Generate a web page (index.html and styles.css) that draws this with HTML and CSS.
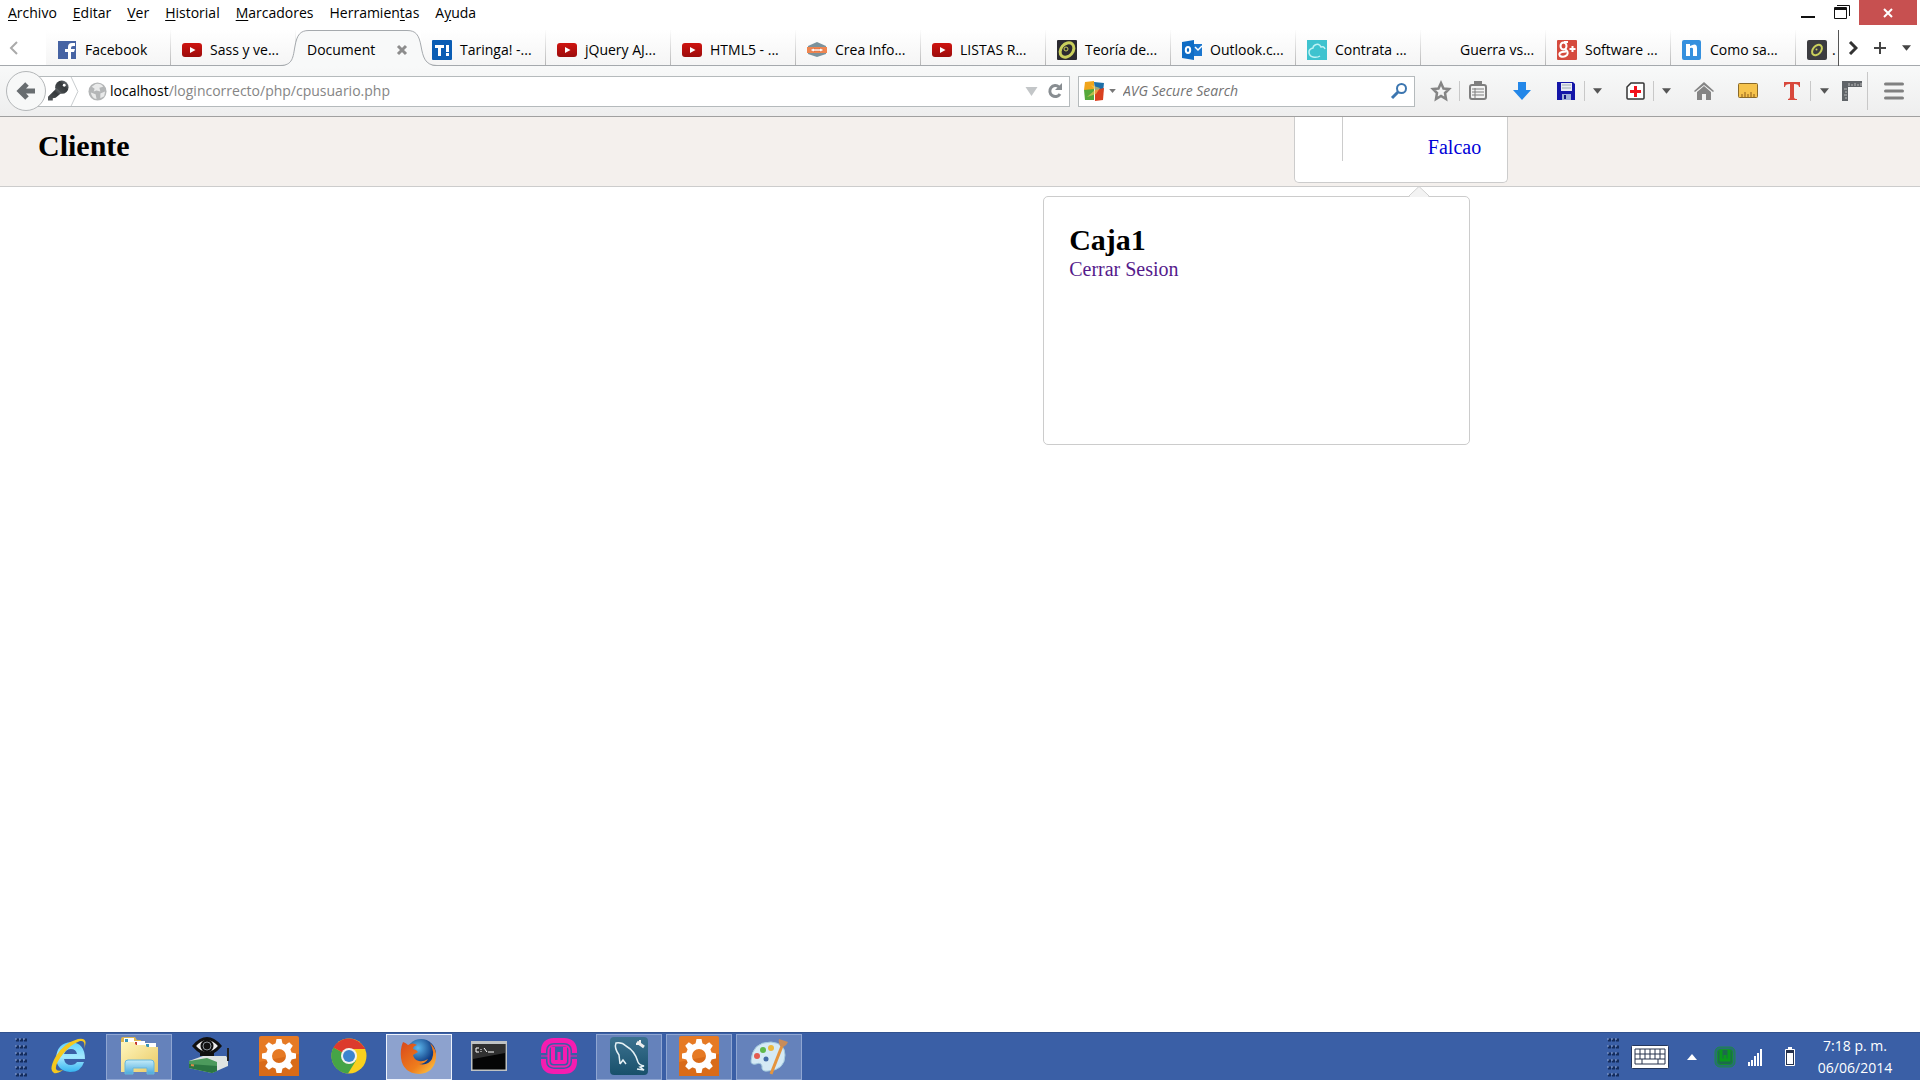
FILE: index.html
```html
<!DOCTYPE html>
<html lang="es">
<head>
<meta charset="utf-8">
<title>Document</title>
<link rel="stylesheet" href="styles.css">
</head>
<body>
<svg class="sprite" aria-hidden="true">
  <defs>
    <linearGradient id="redg" x1="0" y1="0" x2="0" y2="1"><stop offset="0" stop-color="#cf1410"/><stop offset="1" stop-color="#9c0c0c"/></linearGradient>
    <linearGradient id="foldg" x1="0" y1="0" x2="1" y2="1"><stop offset="0" stop-color="#fff6bd"/><stop offset="1" stop-color="#e9c964"/></linearGradient>
    <linearGradient id="clipg" x1="0" y1="0" x2="0" y2="1"><stop offset="0" stop-color="#c4ecfa"/><stop offset="1" stop-color="#4aa9dc"/></linearGradient>
    <linearGradient id="ieg" x1="0" y1="0" x2="0" y2="1"><stop offset="0" stop-color="#5fd2fb"/><stop offset=".5" stop-color="#a4e8ff"/><stop offset="1" stop-color="#35b4f0"/></linearGradient>
    <linearGradient id="foxg" x1="0" y1="0" x2="1" y2="1"><stop offset="0" stop-color="#d9481c"/><stop offset=".6" stop-color="#ef7d1c"/><stop offset="1" stop-color="#ffd34a"/></linearGradient>
    <linearGradient id="sqlg" x1="0" y1="0" x2="0" y2="1"><stop offset="0" stop-color="#3c7290"/><stop offset="1" stop-color="#18506b"/></linearGradient>
    <radialGradient id="globeg" cx=".4" cy=".3"><stop offset="0" stop-color="#5db8ee"/><stop offset="1" stop-color="#123f86"/></radialGradient>
    <linearGradient id="keyg" x1="1" y1="0" x2="0" y2="1"><stop offset="0" stop-color="#82878b"/><stop offset=".4" stop-color="#34383b"/><stop offset="1" stop-color="#53575a"/></linearGradient>
  </defs>
  <symbol id="youtube" viewBox="0 0 20 20"><rect y="3" width="20" height="14" rx="3" fill="url(#redg)"/><path d="M8 7v6l5.500-3z" fill="#fff"/></symbol>
  <symbol id="down" viewBox="0 0 10 6"><path d="M0 0h10L5 6z" fill="currentColor"/></symbol>
  <symbol id="gear" viewBox="0 0 40 40"><rect width="40" height="40" rx="2" fill="#e67a24"/><path d="M0 26L40 18V40H0z" fill="#d96b19"/><circle cx="20" cy="20" r="10" fill="none" stroke="#fff" stroke-width="6"/><path d="M17.500 3h5l1.500 7h-8zM17.500 37h5l1.500-7h-8zM3 17.500v5l7 1.500v-8zM37 17.500v5l-7 1.500v-8zM6.200 9.800l3.600-3.600 6 4-5.600 5.600zM33.800 9.800l-3.600-3.600-6 4 5.600 5.600zM6.200 30.200l3.600 3.600 6-4-5.600-5.600zM33.800 30.200l-3.600 3.600-6-4 5.600-5.600z" fill="#fff"/></symbol>
  <symbol id="wamp" viewBox="0 0 36 36"><path d="M2.500 15V12Q3 3 13 2.500h10Q33 3 33.500 12v3M2.500 21v3Q3 33 13 33.500h10Q33 33 33.500 24v-3" fill="none" stroke="currentColor" stroke-width="5"/><path d="M0 18h8M28 18h8" stroke="currentColor" stroke-width="1"/><rect x="7.500" y="7.500" width="21" height="21" rx="5" fill="none" stroke="currentColor" stroke-width="2"/><path d="M10 9h4v13h8V9h4v14q0 3-3 3H13q-3 0-3-3zM16.500 14h3v10h-3z" fill="currentColor"/></symbol>
  <symbol id="grip" viewBox="0 0 12 40"><path d="M1 3h12M1 10h12M1 17h12M1 24h12M1 31h12M1 38h12" stroke="#142c5c" stroke-width="3" stroke-dasharray="3 1"/><path d="M0 2h12M0 9h12M0 16h12M0 23h12M0 30h12M0 37h12" stroke="#91a8d4" stroke-width="1" stroke-dasharray="2 2"/></symbol>
</svg>

<header class="browser">
  <div class="titlebar">
    <nav class="menu" aria-label="Menú">
      <button><u>A</u>rchivo</button><button><u>E</u>ditar</button><button><u>V</u>er</button><button><u>H</u>istorial</button><button><u>M</u>arcadores</button><button>Herramien<u>t</u>as</button><button>A<u>y</u>uda</button>
    </nav>
    <div class="window-controls">
      <button aria-label="Minimizar"><svg width="16" height="16"><path d="M1 13h14" stroke="#111" stroke-width="2"/></svg></button>
      <button aria-label="Restaurar"><svg width="16" height="16" fill="none" stroke="#111"><path d="M3 1.500h12.500V12M1 4.500h11M.500 3.500h12v11H.500z"/><path d="M0 5h13" stroke-width="2"/></svg></button>
      <button class="close" aria-label="Cerrar"><svg width="12" height="10"><path d="M2 1l8 8M10 1L2 9" stroke="#fff" stroke-width="2"/></svg></button>
    </div>
  </div>

  <div class="tabbar">
    <button class="scroll-left" aria-label="Pestañas anteriores"><svg width="9" height="14"><path d="M8 1L2 7l6 6" fill="none" stroke="#aaa" stroke-width="2"/></svg></button>
    <div class="tabs">
      <button class="tab"><svg class="fav" viewBox="0 0 20 20"><path d="M1 1h18v18H1z" fill="#4663a3"/><path d="M11 19v-7H8V9h3V7q0-4 4-4h3v3h-2q-2 0-2 2v1h4l-1 3h-3v7z" fill="#fff"/></svg><span>Facebook</span></button>
      <button class="tab"><svg class="fav"><use href="#youtube"/></svg><span>Sass y ve...</span></button>
      <div class="tab selected">
        <svg class="tab-shape" viewBox="0 0 157 37"><path d="M0 37V36C13 36 13 27 15 16C17 5 20 1 29 1H127C136 1 139 5 141 16C143 27 145 36 157 36V37z" fill="#f8f9f9"/><path d="M0 35.500C13 35.500 13 27 15 16C17 5 20 .500 29 .500H127C136 .500 139 5 141 16C143 27 145 35.500 157 35.500" fill="none" stroke="#a5a9ad"/></svg>
        <button class="tab-name">Document</button>
        <button class="tab-close" aria-label="Cerrar pestaña"><svg width="12" height="12"><path d="M2 2l8 8M10 2l-8 8" stroke="#8d8d8d" stroke-width="3"/></svg></button>
      </div>
      <button class="tab"><svg class="fav" viewBox="0 0 20 20"><rect width="20" height="20" rx="1" fill="#0b5db4"/><path d="M3 5h9v3H9v8H6V8H3zM14 5h3v7h-3zM14 13h3v3h-3z" fill="#fff"/></svg><span>Taringa! -...</span></button>
      <button class="tab"><svg class="fav"><use href="#youtube"/></svg><span>jQuery AJ...</span></button>
      <button class="tab"><svg class="fav"><use href="#youtube"/></svg><span>HTML5 - ...</span></button>
      <button class="tab"><svg class="fav" viewBox="0 0 20 20"><path d="M1 6l9-4 9 4v1H1zM1 13h18v1l-9 3-9-3z" fill="#7b929c"/><path d="M0 7h20v6H0z" fill="#ef8650"/><path d="M3 10l4-2v1h6V8l4 2-4 2v-1H7v1z" fill="#fff" stroke="#d85b2b" stroke-width=".5"/></svg><span>Crea Info...</span></button>
      <button class="tab"><svg class="fav"><use href="#youtube"/></svg><span>LISTAS R...</span></button>
      <button class="tab"><svg class="fav" viewBox="0 0 20 20"><rect width="20" height="20" rx="1" fill="#2b2a30"/><ellipse cx="10" cy="10" rx="8" ry="6" transform="rotate(-50 10 10)" fill="none" stroke="#c9cf5c" stroke-width="3"/><circle cx="9" cy="9" r="2" fill="none" stroke="#c9cf5c"/></svg><span>Teoría de...</span></button>
      <button class="tab"><svg class="fav" viewBox="0 0 20 20"><path d="M11 4h9v12h-9z" fill="#1b77cf"/><path d="M13 7l3 3 4-4" fill="none" stroke="#fff" stroke-width="1.500"/><path d="M0 2l12-2v20L0 18z" fill="#0f6cc4"/><ellipse cx="6" cy="10" rx="2.200" ry="3" fill="none" stroke="#fff" stroke-width="2"/></svg><span>Outlook.c...</span></button>
      <button class="tab"><svg class="fav" viewBox="0 0 20 20"><rect width="20" height="20" fill="#3fc3cf"/><path d="M18 9q-1-3-4-2Q12 3 8 5q-2 1-2 3-4 1-4 4 0 4 4 5 4 1 7-1" fill="none" stroke="#bff2f4" stroke-width="1.500"/></svg><span>Contrata ...</span></button>
      <button class="tab"><i class="fav"></i><span>Guerra vs...</span></button>
      <button class="tab"><svg class="fav" viewBox="0 0 20 20"><rect width="20" height="20" rx="1" fill="#d54a3d"/><g fill="none" stroke="#fff" stroke-width="2"><ellipse cx="6.500" cy="6" rx="3" ry="3.500"/><path d="M7 2h4M8 9q4 3 2 6-3 3-7 1-2-3 2-4l4-.500M12.500 9h6M15.500 6v6"/></g></svg><span>Software ...</span></button>
      <button class="tab"><svg class="fav" viewBox="0 0 20 20"><rect width="19" height="20" rx="2" fill="#3590de"/><path d="M4 4h4v2q7-4 7 2v8h-4V9q0-2-3-1v8H4z" fill="#fff"/></svg><span>Como sa...</span></button>
      <button class="tab last" aria-label="Pestaña 15"><svg class="fav" viewBox="0 0 20 20"><rect width="20" height="20" rx="2" fill="#3c3c40"/><ellipse cx="10" cy="10" rx="6" ry="4" transform="rotate(-50 10 10)" fill="none" stroke="#c9cf5c" stroke-width="2"/><circle cx="9.500" cy="9.500" r="1" fill="#c9cf5c"/></svg><span>.</span></button>
    </div>
    <div class="tab-tools">
      <button aria-label="Pestañas siguientes"><svg width="10" height="14"><path d="M2 1l6 6-6 6" fill="none" stroke="#333" stroke-width="3"/></svg></button>
      <button aria-label="Nueva pestaña"><svg width="14" height="14"><path d="M7 1v12M1 7h12" stroke="#444" stroke-width="2"/></svg></button>
      <button aria-label="Lista de pestañas"><svg width="9" height="6"><use href="#down"/></svg></button>
    </div>
  </div>

  <div class="navbar">
    <button class="back" aria-label="Atrás"><svg width="20" height="18"><path d="M19 9H5M11 2L4 9l7 7" fill="none" stroke="#686d70" stroke-width="5"/></svg></button>
    <div class="urlbox">
      <svg class="key" viewBox="0 0 22 22"><circle cx="14.500" cy="7" r="7" fill="url(#keyg)"/><path d="M9 8l5 5-6 5-3 .500V21H0v-4z" fill="url(#keyg)"/><circle cx="17" cy="5" r="1.500" fill="#fff"/></svg>
      <svg class="chevron" viewBox="0 0 10 30"><path d="M1 0l7 15-7 15" fill="none" stroke="#c6cacc"/></svg>
      <svg class="globe" viewBox="0 0 20 20"><circle cx="10" cy="10" r="9.500" fill="#b4b6b7"/><path d="M8 2q6-1 8 3l-4 1 1 4-4-1-3 1 1-3-3-2zM3 11l5 2 1 5q-5-1-6-7zM13 12l5-2-1 5-4 2z" fill="#e9eaea"/></svg>
      <div class="address" role="textbox" aria-label="Dirección"><b>localhost</b>/logincorrecto/php/cpusuario.php</div>
      <button aria-label="Historial de direcciones"><svg width="13" height="9" color="#c3c6c8"><path d="M.500 0h12L6.500 9z" fill="currentColor"/></svg></button>
      <button aria-label="Recargar"><svg width="16" height="16"><path d="M12 4a5.500 5.500 0 1 0 1 7" fill="none" stroke="#888d91" stroke-width="3"/><path d="M15 0v7H8z" fill="#888d91"/></svg></button>
    </div>
    <div class="searchbox">
      <button class="engine" aria-label="Motor de búsqueda"><svg width="20" height="20"><path d="M1 1l9-1v10L0 9z" fill="#f0a51c"/><path d="M10 1l10 1-1 9-8-2z" fill="#1e6fa8"/><path d="M0 9l10-1v11H1z" fill="#56a83a"/><path d="M11 9l9-2-1 12-8 1z" fill="#d9411f"/><path d="M7 4l4 5-8 7 9-3 4-6z" fill="#f5d15a" opacity=".6"/></svg><svg width="7" height="4" color="#777"><use href="#down"/></svg></button>
      <input type="text" aria-label="Buscar" placeholder="AVG Secure Search">
      <button aria-label="Buscar ahora"><svg width="18" height="18"><circle cx="11.500" cy="6.500" r="4.500" fill="none" stroke="#3c76b0" stroke-width="2"/><path d="M8 10l-6 6" stroke="#3c76b0" stroke-width="3"/></svg></button>
    </div>
    <div class="tools">
      <div class="group"><button aria-label="Añadir a marcadores"><svg width="22" height="22"><path d="M11 3l2.500 5.500 5.500.500-4 4 1 6-5-3-5 3 1-6-4-4 5.500-.500z" fill="none" stroke="#858585" stroke-width="2.500"/></svg></button><hr><button aria-label="Marcadores"><svg width="18" height="20" fill="none" stroke="#7f7f7f" stroke-width="2"><rect x="1" y="4" width="16" height="14" rx="2"/><path d="M3 8h12M3 11h12M3 14h12M6 7v10" stroke-width="1"/><path d="M6 4V1h6v3z" fill="#7f7f7f"/></svg></button></div>
      <div class="group"><button aria-label="Descargas"><svg width="18" height="18"><path d="M5 0h8v8h5l-9 10L0 8h5z" fill="#2387e8"/></svg></button></div>
      <div class="group"><button aria-label="Guardar"><svg width="18" height="18"><path d="M0 0h16l2 2v16H0z" fill="#1416a8"/><path d="M4 1h11v8H4z" fill="#e8eaf5"/><path d="M5 3h9M5 6h9" stroke="#9aa"/><path d="M5 12h9v6H5z" fill="#9fb0d8"/><path d="M7 13h2v4H7z" fill="#141480"/></svg></button><hr><button class="arrow" aria-label="Opciones de guardar"><svg width="9" height="6"><use href="#down"/></svg></button></div>
      <div class="group"><button aria-label="Restaurar sesión"><svg width="19" height="18"><path d="M5 1h12q1 0 1 1v14q0 1-1 1H2q-1 0-1-1V5z" fill="#fff" stroke="#333" stroke-width="1.500"/><path d="M8 4h3v4h4v3h-4v4H8v-4H4V8h4z" fill="#f3101a"/></svg></button><hr><button class="arrow" aria-label="Opciones de sesión"><svg width="9" height="6"><use href="#down"/></svg></button></div>
      <div class="group"><button aria-label="Inicio"><svg width="20" height="18"><path d="M10 0l10 9-1 1-9-7-9 7-1-1zM3 10l7-6 7 6v8h-5v-6H8v6H3z" fill="#858585"/></svg></button></div>
      <div class="group"><button aria-label="Regla"><svg width="20" height="16"><rect x=".500" y=".500" width="19" height="14" rx="1" fill="#f6c34c" stroke="#8b6a28"/><path d="M4 14v-3M7 14v-5M10 14v-3M13 14v-5M16 14v-3" stroke="#8b5b18"/></svg></button></div>
      <div class="group"><button aria-label="Texto"><svg width="16" height="18"><path d="M0 0h16v5h-1q0-3-5-3v13q0 2 3 2v1H4v-1q2 0 2-2V2Q1 2 1 5H0z" fill="#d8483c"/></svg></button><hr><button class="arrow wide" aria-label="Opciones de texto"><svg width="9" height="6"><use href="#down"/></svg></button><button class="corner" aria-label="Medir"><svg width="20" height="20"><path d="M0 0h20v6H6v14H0z" fill="#606468"/><path d="M7 5V2M10 5V3M13 5V2M16 5V3M19 5V2M5 8H2M5 11H3M5 14H2M5 17H3" stroke="#bbb"/></svg></button><hr class="tall"><button class="burger" aria-label="Abrir menú"><svg width="20" height="18"><path d="M1.500 2h17M1.500 9h17M1.500 16h17" stroke="#808080" stroke-width="3" stroke-linecap="round"/></svg></button></div>
    </div>
  </div>
</header>

<main class="page">
  <header class="site-header">
    <h1>Cliente</h1>
    <div class="user">
      <div class="avatar"></div>
      <a href="#sesion">Falcao</a>
      <section class="popup" id="sesion">
        <svg class="pointer" viewBox="0 0 22 11"><path d="M1 11L11 1l10 10z" fill="#f3f3f3"/><path d="M1 10L11 .500 21 10" fill="none" stroke="#ccc"/></svg>
        <h2>Caja1</h2>
        <a href="#salir">Cerrar Sesion</a>
      </section>
    </div>
  </header>
</main>

<footer class="taskbar">
  <svg class="grip"><use href="#grip"/></svg>
  <div class="apps">
    <button aria-label="Internet Explorer"><svg width="40" height="40"><path d="M36 23H15q1 6 7 6 4 0 6-3h7q-3 10-14 10Q8 35 7 22 8 7 22 6q14 1 14 17zM15 18h13q-1-5-6-5t-7 5z" fill="url(#ieg)"/><path d="M35 13Q40 1 29 3 15 7 7 20-1 34 5 37q3 1 9-3-6 2-7-1-1-5 7-15Q22 8 31 5q6-1 4 8z" fill="#f5c81e"/></svg></button>
    <button class="open" aria-label="Explorador"><svg width="40" height="40"><path d="M2 3q0-2 2-2h12l2 3h4v4h15v28H2z" fill="#dcb650"/><path d="M5 2h10v5H5zM14 5h12v5H14zM25 7h12v4H25z" fill="#fff"/><path d="M6 3h3v4H6zM27 8h3v3h-3z" fill="#3a96b5"/><path d="M16 6h2v3h-2z" fill="#c5372d"/><path d="M2 6h13l2 3h9l2 2h11v25H2z" fill="url(#foldg)"/><path d="M6 38V27q0-3 3-3h23q3 0 3 3v11h-7v-6H14v6z" fill="url(#clipg)" stroke="#68b7dc"/></svg></button>
    <button aria-label="Monitor de red"><svg width="40" height="38"><path d="M0 24l14-5h23l2 3v7l-16 7L0 31z" fill="#dfe4e2"/><path d="M0 24l18-3 10 4v9l-5 2L0 31z" fill="#4c9a5c"/><path d="M0 27l28 2v5l-5 2L0 31z" fill="#2b7541"/><path d="M2 28l3 .500" stroke="#d98a4b" stroke-width="2"/><path d="M39 11v13" stroke="#222" stroke-width="2"/><path d="M11 16h14v3H11z" fill="#111"/><path d="M5 9Q18-6 31 9 18 24 5 9z" fill="#eee" stroke="#111" stroke-width="3"/><circle cx="18" cy="9" r="6.500" fill="#111"/><circle cx="18" cy="9" r="4" fill="none" stroke="#8b9298"/></svg></button>
    <button aria-label="Configuración"><svg width="40" height="40"><use href="#gear"/></svg></button>
    <button aria-label="Chrome"><svg width="36" height="36"><circle cx="18" cy="18" r="17.500" fill="#f9d01e"/><path d="M18 18L2.500 9.500A17.500 17.500 0 0 0 17 35.500l8-13z" fill="#45a447"/><path d="M18 18L2.500 9.500Q8 .500 18 .500T34.500 11H18z" fill="#dc3a2d"/><circle cx="18" cy="18" r="8" fill="#f2f2ee"/><circle cx="18" cy="18" r="6" fill="#3c84cf"/></svg></button>
    <button class="open active" aria-label="Firefox"><svg width="38" height="38"><circle cx="21" cy="17" r="15" fill="url(#globeg)"/><path d="M3 5q3 1 5 3 5-3 9 0-4 1-4 4 4 1 5 3l-5 3q1 5 6 6 4 1 9-2-3 5-9 5 9 2 13-5 3-7-2-16 7 6 6 15-2 15-17 16Q3 36 1 21 0 12 3 5z" fill="url(#foxg)"/></svg></button>
    <button aria-label="Símbolo del sistema"><svg width="36" height="30"><path d="M0 0h36v30H0z" fill="#bfc2c3"/><path d="M1.500 3h33v25.500h-33z" fill="#050505"/><path d="M2 3h32v9L2 18z" fill="#303030"/><path d="M8 7H5v4h3M10 8v1M10 10v1M13 7l3 4M17 11h6" fill="none" stroke="#fff"/></svg></button>
    <button class="wamp" aria-label="Wamp"><svg width="36" height="36"><use href="#wamp"/></svg></button>
    <button class="open" aria-label="MySQL Workbench"><svg width="38" height="38"><rect width="38" height="38" rx="4" fill="url(#sqlg)"/><path d="M10 27L9 18Q4 11 6 6q6-1 10 3 9 5 12 16 1 3 6 4l-4 1 4 3-7-1M10 27l3-4 3 4" fill="none" stroke="#e5f1f5" stroke-width="1.500"/><path d="M27 5l7 5" stroke="#eee" stroke-width="3"/><path d="M30 3v4h-4" fill="none" stroke="#eee" stroke-width="2"/></svg></button>
    <button class="open" aria-label="Servicios"><svg width="40" height="40"><use href="#gear"/></svg></button>
    <button class="open" aria-label="Paint"><svg width="40" height="38"><path d="M2 24Q3 5 22 5q14 1 14 13 0 15-17 16-7 1-6-5-1-4-6-2-5 1-5-3z" fill="#d5eaf5" stroke="#a2c8dd"/><circle cx="8" cy="19" r="3" fill="#e35b51"/><circle cx="14" cy="13" r="3" fill="#5fb94c"/><circle cx="22" cy="11" r="3" fill="#ecb83d"/><circle cx="17" cy="22" r="2.500" fill="#456ca8"/><path d="M33 9L22 37" stroke="#e5943d" stroke-width="3"/><path d="M31 9q-2-5-1-7l9 3q-1 3-5 5z" fill="#c88c5a"/></svg></button>
  </div>
  <div class="tray">
    <svg class="grip"><use href="#grip"/></svg>
    <button class="keyboard" aria-label="Teclado"><svg width="38" height="24"><rect x=".500" y=".500" width="37" height="23" rx="1" fill="#fff" stroke="#25375d"/><path d="M4 4h30v15H4zM4 9h30M4 14h30M9 4v10M14 4v10M19 4v10M24 4v10M29 4v10M11 14v5M27 14v5" fill="none" stroke="#26324c"/></svg></button>
    <button class="more" aria-label="Iconos ocultos"><svg width="10" height="6"><path d="M0 6l5-6 5 6z" fill="#fff"/></svg></button>
    <button class="server" aria-label="Servidor"><svg width="22" height="22"><rect x="1" y="1" width="20" height="20" rx="5" fill="#2b6a78" stroke="#1c8a48"/><rect x="3.500" y="3.500" width="15" height="15" rx="3" fill="#1c6a4c" stroke="#149030"/><path d="M7 4v10h8V4M11 9v6" fill="none" stroke="#0a9a1c" stroke-width="3"/></svg></button>
    <button class="signal" aria-label="Red"><svg width="16" height="18"><path d="M1 18v-4h2v4zM4 18v-6h2v6zM7 18V8h2v10zM10 18V5h2v13zM13 18V1h2v17z" fill="#fff"/></svg></button>
    <button class="battery" aria-label="Batería"><svg width="12" height="20"><path d="M4 0h4v3H4z" fill="#fff"/><path d="M1.500 2.500h9v16h-9z" fill="#26324c" stroke="#fff"/><path d="M3 6h6v11H3z" fill="#fff"/></svg></button>
    <button class="clock"><time datetime="2014-06-06T19:18">7:18 p. m.<br>06/06/2014</time></button>
  </div>
</footer>
</body>
</html>
```
FILE: styles.css
```css
* { box-sizing: border-box; }

body {
  margin: 0;
  min-height: 100vh;
  display: flex;
  flex-direction: column;
  background: #fff;
  color: #000;
  font: 14px/20px "Open Sans", "Noto Sans", sans-serif;
}

button, input {
  border: 0;
  padding: 0;
  margin: 0;
  background: none;
  color: inherit;
  font: inherit;
}

button {
  display: flex;
  align-items: center;
  justify-content: center;
}

svg { display: block; flex: none; }
.sprite { position: absolute; width: 0; height: 0; }

/* Window title and menu */
.titlebar {
  display: flex;
  justify-content: space-between;
  align-items: flex-start;
  height: 30px;
}

.menu { display: flex; gap: 16px; padding: 3px 8px; }
.menu button { display: block; }
.menu u { text-underline-offset: 2px; }

.window-controls { display: flex; padding-right: 3px; }
.window-controls button { width: 34px; height: 24px; }
.window-controls .close { width: 58px; height: 25px; background: #c75050; }

/* Tabs */
.tabbar {
  display: flex;
  height: 36px;
  border-bottom: 1px solid #a5a9ad;
}

.scroll-left { width: 46px; padding-right: 20px; }

.tabs {
  display: flex;
  flex: 1;
  min-width: 0;
  height: 36px;
  overflow: hidden;
  border-right: 1px solid #555;
}

.tab {
  flex: none;
  display: flex;
  align-items: center;
  justify-content: flex-start;
  gap: 8px;
  width: 125px;
  height: 35px;
  padding: 4px 0 0 11px;
  white-space: nowrap;
  border-right: 1px solid;
  border-image: linear-gradient(#fff, #b5b5b5) 1;
  background: linear-gradient(#fff, #f5f5f5);
}

.tab.last { flex: 1; border: 0; gap: 5px; }

.fav { width: 20px; height: 20px; }

.selected {
  position: relative;
  height: 36px;
  justify-content: space-between;
  padding-right: 13px;
  border: 0;
  background: none;
  z-index: 1;
}

.selected button { position: relative; }

.tab-shape {
  position: absolute;
  left: -16px;
  top: 0;
  width: 157px;
  height: 37px;
}

.tab-tools { display: flex; color: #444; }
.tab-tools button { width: 27px; }

/* Address and search row */
.navbar {
  display: flex;
  align-items: center;
  height: 51px;
  padding-left: 6px;
  background: linear-gradient(#f8f9f9, #eee);
  border-bottom: 1px solid #a0a0a0;
}

.back {
  position: relative;
  z-index: 1;
  flex: none;
  width: 40px;
  height: 40px;
  border: 1px solid #b4b7b9;
  border-radius: 50%;
  background: #f7f8f8;
}

.urlbox, .searchbox {
  display: flex;
  align-items: center;
  height: 31px;
  border: 1px solid #b5babc;
  background: #fff;
}

.urlbox { flex: 1; min-width: 0; margin: 0 8px 0 -8px; padding: 0 2px 0 9px; }
.urlbox button { width: 24px; height: 28px; }
.key { width: 21px; height: 22px; }
.chevron { width: 10px; height: 29px; margin: 0 8px 0 1px; }
.globe { width: 19px; height: 19px; margin-right: 3px; }
.address { flex: 1; color: #858585; }
.address b { color: #000; font-weight: 400; }

.searchbox { width: 337px; margin-right: 8px; padding-left: 5px; }
.engine { gap: 5px; margin-right: 7px; }
.searchbox input { flex: 1; min-width: 0; outline: 0; }
.searchbox input::placeholder { color: #737373; font-style: italic; opacity: 1; }
.searchbox > button:last-child { width: 30px; height: 28px; }

.tools { display: flex; gap: 8px; color: #555; }
.group { display: flex; align-items: center; }
.group button { width: 36px; height: 36px; }
.group .arrow { width: 24px; }
.group .wide { width: 26px; }
.group .corner { width: 30px; }
.group .burger { width: 52px; }
.group hr { width: 1px; height: 20px; margin: 0; border: 0; background: #c8c8c8; }
.group .tall { height: 38px; }

/* Web page */
.page { flex: 1; font: 20px/24px "Liberation Serif", "Times New Roman", serif; }
.page a { text-decoration: none; color: #0000d8; }
.page h1, .page h2 { margin: 0; font-size: 30px; line-height: 34px; }

.site-header {
  display: flex;
  align-items: flex-start;
  justify-content: space-between;
  height: 70px;
  padding: 0 21.45% 0 38px;
  background: #f4f0ed;
  border-bottom: 1px solid #ccc;
}

.site-header h1 { padding-top: 12px; }

.user {
  position: relative;
  display: flex;
  justify-content: space-between;
  width: 214px;
  height: 66px;
  padding-right: 26px;
  background: #fff;
  border: 1px solid #ccc;
  border-top: 0;
  border-radius: 0 0 5px 5px;
}

.avatar { width: 48px; height: 44px; border-right: 1px solid #ccc; }
.user > a { padding-top: 18px; }

.popup {
  position: absolute;
  top: 79px;
  right: 37px;
  width: 427px;
  height: 249px;
  padding: 26px 25px;
  background: #fff;
  border: 1px solid #ccc;
  border-radius: 5px;
}

.popup a { display: block; color: #551a8b; }

.pointer {
  position: absolute;
  top: -11px;
  right: 39px;
  width: 22px;
  height: 11px;
}

/* Taskbar */
.taskbar {
  display: flex;
  align-items: center;
  height: 48px;
  padding-left: 15px;
  background: #3a5fa6;
  border-top: 1px solid #31528f;
  color: #fff;
}

.grip { width: 12px; height: 40px; }
.apps { display: flex; flex: 1; gap: 4px; padding-left: 9px; }
.apps button { width: 66px; height: 46px; padding-bottom: 2px; }
.apps .open { border: 1px solid #8fa6d2; background: #6582bb; }
.apps .active { border-color: #eef3fc; background: #8da2ce; }
.apps .wamp { color: #f51cb0; }

.tray { display: flex; align-items: center; }
.tray button { height: 46px; }
.keyboard { width: 62px; }
.more { width: 22px; }
.server { width: 44px; }
.signal { width: 16px; margin-right: 6px; }
.battery { width: 42px; }
.tray .clock {
  width: 88px;
  margin-right: 21px;
  line-height: 22px;
  text-align: center;
  white-space: nowrap;
}
```
